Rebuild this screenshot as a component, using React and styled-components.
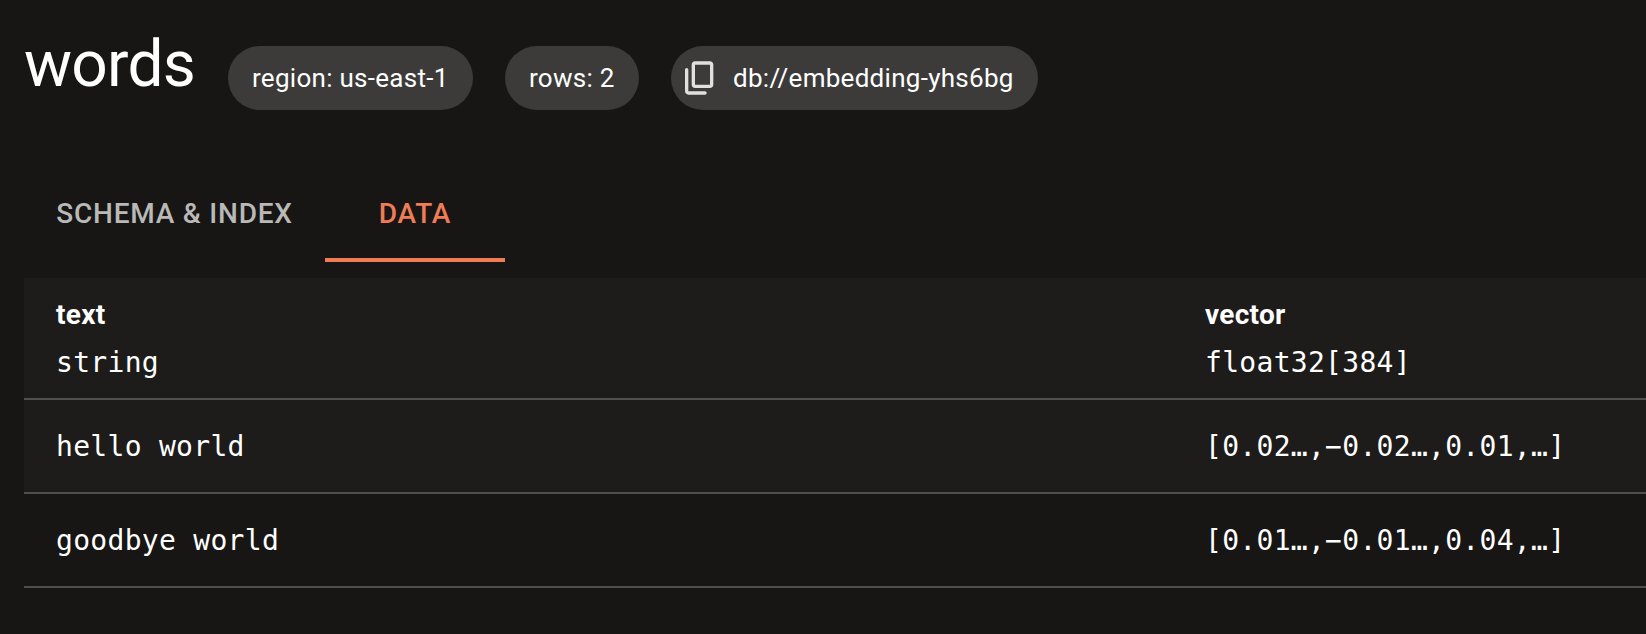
import React from "react";
import styled, { createGlobalStyle } from "styled-components";

const GlobalStyle = createGlobalStyle`
  *, *::before, *::after { box-sizing: border-box; }
  body { margin: 0; background: #171614; color: #fff; font-family: Roboto, "Liberation Sans", sans-serif; overflow: hidden; }
`;

const Page = styled.main`
  height: 634px;
  padding-left: 24px;
  background: #171614;
  overflow: hidden;
`;

const Header = styled.header`
  display: flex;
  align-items: flex-start;
  height: 166px;
  padding-top: 24px;
`;

const Title = styled.h1`
  margin: 0;
  width: 172px;
  padding-top: 1px;
  font-size: 64px;
  font-weight: 400;
  line-height: 80px;
  letter-spacing: -0.75px;
  white-space: nowrap;
`;

const Chips = styled.div`
  display: flex;
  gap: 32px;
  margin: 22px 0 0 32px;
`;

const Chip = styled.div`
  display: flex;
  align-items: center;
  width: ${(p) => p.$width}px;
  height: 64px;
  padding-left: ${(p) => (p.$icon ? 9 : 24)}px;
  gap: 13px;
  border-radius: 32px;
  background: #3c3b39;
  font-size: 26px;
  letter-spacing: 0.28px;
  white-space: nowrap;
`;

const CopyIcon = styled.svg`
  flex: none;
  width: 40px;
  height: 40px;
  fill: #e0e0df;
`;

const Tabs = styled.nav`
  display: flex;
  height: 96px;
`;

const Tab = styled.button`
  width: ${(p) => p.$width}px;
  padding: 2px 0 0;
  border: 0;
  border-bottom: 4px solid ${(p) => (p.$active ? "#f07c56" : "transparent")};
  background: none;
  color: ${(p) => (p.$active ? "#f07c56" : "#b9b9b8")};
  font: 500 28px/35px Roboto, sans-serif;
  letter-spacing: 0.78px;
  white-space: nowrap;
`;

const Table = styled.section`
  margin-top: 16px;
`;

const Row = styled.div`
  display: grid;
  grid-template-columns: 1149px 1fr;
  align-items: center;
  height: ${(p) => (p.$head ? 122 : 94)}px;
  padding: 2px 0 0 32px;
  border-bottom: 2px solid #514f4d;
  background: ${(p) => (p.$shaded ? "#1d1c1a" : "transparent")};
`;

const ColumnName = styled.div`
  font-size: 28px;
  font-weight: 700;
  line-height: 48px;
  letter-spacing: 0.3px;
`;

const Mono = styled.div`
  font-family: "DejaVu Sans Mono", monospace;
  font-size: 28px;
  line-height: 48px;
  letter-spacing: 0.3px;
  white-space: pre;
`;

const columns = [
  { name: "text", type: "string" },
  { name: "vector", type: "float32[384]" },
];

const rows = [
  ["hello world", "[0.02…,−0.02…,0.01,…]"],
  ["goodbye world", "[0.01…,−0.01…,0.04,…]"],
];

export default function App() {
  return (
    <Page>
      <GlobalStyle />
      <Header>
        <Title>words</Title>
        <Chips>
          <Chip $width={245}>region: us-east-1</Chip>
          <Chip $width={134}>rows: 2</Chip>
          <Chip $width={367} $icon>
            <CopyIcon viewBox="0 0 24 24" aria-hidden="true">
              <path d="M15 20H5V7c0-.55-.45-1-1-1s-1 .45-1 1v13c0 1.1.9 2 2 2h10c.55 0 1-.45 1-1s-.45-1-1-1zm5-4V4c0-1.1-.9-2-2-2H9c-1.1 0-2 .9-2 2v12c0 1.1.9 2 2 2h9c1.1 0 2-.9 2-2zm-2 0H9V4h9v12z" />
            </CopyIcon>
            <span>db://embedding-yhs6bg</span>
          </Chip>
        </Chips>
      </Header>
      <Tabs>
        <Tab $width={301}>SCHEMA &amp; INDEX</Tab>
        <Tab $width={180} $active>DATA</Tab>
      </Tabs>
      <Table>
        <Row $head $shaded>
          {columns.map((c) => (
            <div key={c.name}>
              <ColumnName>{c.name}</ColumnName>
              <Mono>{c.type}</Mono>
            </div>
          ))}
        </Row>
        {rows.map((cells, i) => (
          <Row key={cells[0]} $shaded={i % 2 === 0}>
            {cells.map((cell) => (
              <Mono key={cell}>{cell}</Mono>
            ))}
          </Row>
        ))}
      </Table>
    </Page>
  );
}
